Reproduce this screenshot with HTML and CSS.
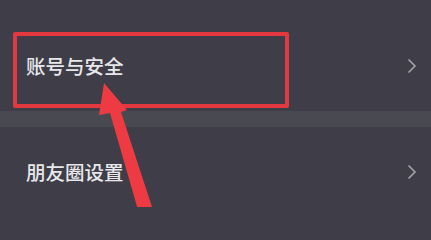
FILE: index.html
```html
<!DOCTYPE html>
<html lang="zh-CN">
<head>
<meta charset="utf-8">
<link rel="stylesheet" href="styles.css">
</head>
<body>
<div class="screen">
  <div class="row row-first">
    <span class="label">账号与安全</span>
    <svg class="chev" width="10" height="16" viewBox="0 0 10 16"><path d="M1.5 1.5 L8 8 L1.5 14.5" fill="none" stroke="#a3a3aa" stroke-width="1.6"/></svg>
  </div>
  <div class="gap"></div>
  <div class="row row-second">
    <span class="label">朋友圈设置</span>
    <svg class="chev" width="10" height="16" viewBox="0 0 10 16"><path d="M1.5 1.5 L8 8 L1.5 14.5" fill="none" stroke="#a3a3aa" stroke-width="1.6"/></svg>
  </div>
  <div class="highlight"></div>
  <svg class="arrow" width="431" height="207" viewBox="0 0 431 207">
    <path d="M104 83 L127 110 L121 112 L153 210 L138 210 L110 113 L99 115 Z" fill="#ee3a42"/>
  </svg>
</div>
</body>
</html>
```
FILE: styles.css
```css
html, body {
  margin: 0;
  padding: 0;
  background: #3e3d48;
}
.screen {
  position: relative;
  width: 431px;
  height: 207px;
  overflow: hidden;
  background: #3e3d48;
  font-family: "Noto Sans CJK SC", "Noto Sans", sans-serif;
  display: flex;
  flex-direction: column;
}
.row {
  display: flex;
  align-items: center;
  justify-content: space-between;
  padding: 0 14px 0 26px;
  box-sizing: border-box;
  flex-shrink: 0;
}
.row-first {
  height: 111px;
  padding-top: 20px;
}
.row-second {
  height: 90px;
}
.gap {
  height: 16px;
  background: #494951;
  flex-shrink: 0;
}
.label {
  color: #e8e8eb;
  font-size: 19.5px;
  font-weight: 500;
  line-height: 1;
  letter-spacing: 0;
}
.chev {
  display: block;
}
.highlight {
  position: absolute;
  left: 13px;
  top: 32px;
  width: 276px;
  height: 76px;
  box-sizing: border-box;
  border: 4px solid #e3383f;
  border-radius: 2px;
}
.arrow {
  position: absolute;
  left: 0;
  top: 0;
}
```
